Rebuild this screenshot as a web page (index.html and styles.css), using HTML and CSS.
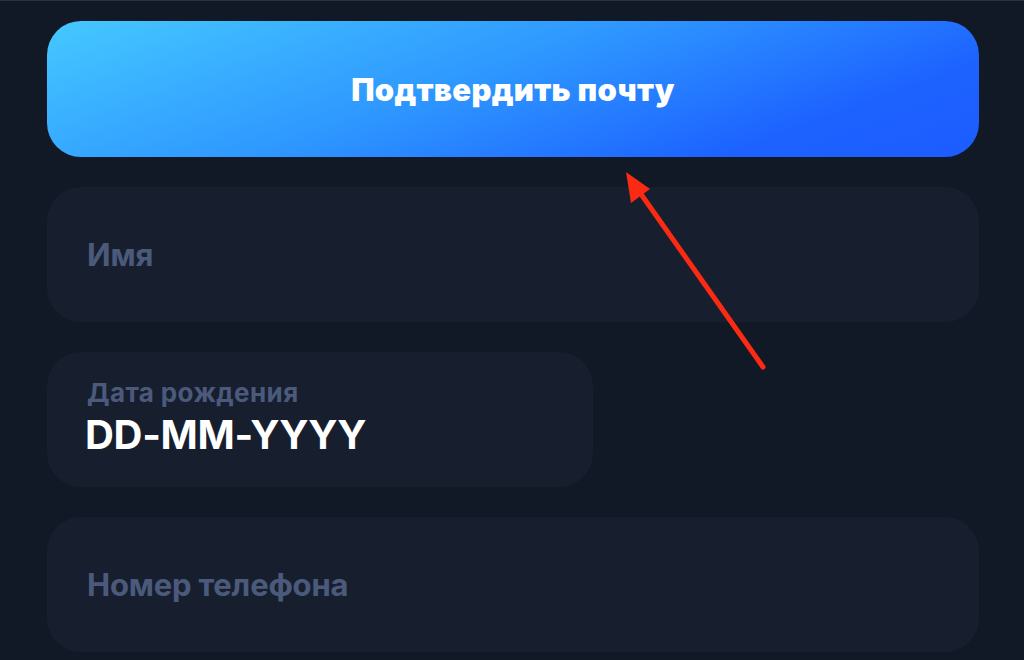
FILE: index.html
```html
<!DOCTYPE html>
<html lang="ru">
<head>
    <meta charset="UTF-8">
    <meta name="viewport" content="width=device-width, initial-scale=1.0">
    <title>Профиль</title>
    <link rel="stylesheet" href="styles.css">
</head>
<body>

    <div class="form">
        <!-- Confirm email button -->
        <button class="confirm-btn">Подтвердить почту</button>

        <!-- Profile fields -->
        <div class="field">
            <span class="placeholder">Имя</span>
        </div>

        <div class="field field-date">
            <span class="label">Дата рождения</span>
            <span class="value">DD-MM-YYYY</span>
        </div>

        <div class="field">
            <span class="placeholder">Номер телефона</span>
        </div>
    </div>

    <!-- Red hint arrow -->
    <svg class="hint-arrow" width="1024" height="660" viewBox="0 0 1024 660">
        <line x1="763" y1="367" x2="636" y2="187" stroke="#fb2a12" stroke-width="5" stroke-linecap="round"/>
        <polygon points="626,172 650,189 631,203" fill="#fb2a12"/>
    </svg>

</body>
</html>
```

FILE: styles.css
```css
/* General Styles */
html, body {
    margin: 0;
    height: 100%;
}

body {
    font-family: 'Inter', 'Roboto', sans-serif;
    background-color: #121926; /* Dark navy background */
    border-top: 1px solid #2c323c;
    box-sizing: border-box;
    overflow: hidden;
    position: relative;
}

.form {
    width: 932px;
    margin-left: 47px;
    padding-top: 20px;
    display: flex;
    flex-direction: column;
    gap: 30px;
}

/* Button */
.confirm-btn {
    height: 136px;
    border: none;
    border-radius: 34px;
    background: linear-gradient(160deg, #45c8ff 0%, #2e97ff 45%, #1d62ff 80%, #1c5cff 100%);
    color: #fff;
    font-family: 'Inter', sans-serif;
    font-size: 31px;
    font-weight: 900;
    letter-spacing: 0.3px;
    cursor: pointer;
    padding: 0;
}

/* Fields */
.field {
    height: 135px;
    border-radius: 34px;
    background-color: #171f2f;
    padding: 0 40px;
    display: flex;
    flex-direction: column;
    justify-content: center;
    box-sizing: border-box;
}

.field-date {
    width: 546px;
    gap: 6px;
    padding-bottom: 4px;
}

.placeholder {
    color: #4b5a7b;
    font-size: 31px;
    font-weight: 700;
    letter-spacing: -0.2px;
}

.label {
    color: #4b5a7b;
    font-size: 26px;
    font-weight: 700;
    line-height: 28px;
    letter-spacing: 0.4px;
}

.value {
    color: #fff;
    font-size: 40px;
    font-weight: 700;
    line-height: 44px;
    letter-spacing: -0.3px;
    margin-left: -2px;
}

/* Arrow overlay */
.hint-arrow {
    position: absolute;
    top: -1px;
    left: 0;
    pointer-events: none;
}
```
